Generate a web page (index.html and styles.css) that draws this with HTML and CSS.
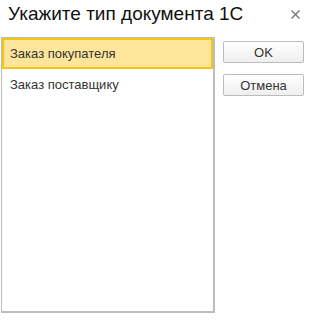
FILE: index.html
```html
<!DOCTYPE html>
<html lang="ru">
<head>
  <meta charset="UTF-8">
  <title>Укажите тип документа 1С</title>
  <link rel="stylesheet" href="styles.css">
</head>
<body>
  <div class="dialog">
    <div class="header">
      <h1 class="title">Укажите тип документа 1С</h1>
      <svg class="close-btn" width="9" height="9" viewBox="0 0 9 9">
        <path d="M0.5 0.5 L8.5 8.5 M8.5 0.5 L0.5 8.5" stroke="#6f6f6f" stroke-width="1.2" fill="none"/>
      </svg>
    </div>
    <div class="body">
      <div class="doc-list">
        <div class="doc-item selected">Заказ покупателя</div>
        <div class="doc-item">Заказ поставщику</div>
      </div>
      <div class="actions">
        <button class="btn">OK</button>
        <button class="btn">Отмена</button>
      </div>
    </div>
  </div>
</body>
</html>
```

FILE: styles.css
```css
body {
  margin: 0;
  padding: 0;
  background: #fff;
  font-family: 'Liberation Sans', Arial, sans-serif;
  color: #333;
}
.dialog {
  width: 310px;
  height: 320px;
  background: #fff;
}
.header {
  display: flex;
  align-items: center;
  justify-content: space-between;
  height: 28px;
  padding: 0 10px 0 8px;
}
.title {
  margin: 0;
  font-size: 19px;
  font-weight: normal;
  color: #111;
}
.close-btn {
  margin-top: 1px;
}
.body {
  display: flex;
  align-items: flex-start;
  gap: 8px;
  padding: 9px 0 0 1px;
}
.doc-list {
  box-sizing: border-box;
  width: 214px;
  height: 276px;
  border: 1px solid #bdbdbd;
  border-right-width: 2px;
  border-bottom-width: 2px;
}
.doc-item {
  box-sizing: border-box;
  height: 31px;
  line-height: 27px;
  padding-left: 6px;
  font-size: 13px;
  color: #333;
  border: 2px solid transparent;
}
.doc-item.selected {
  background: #fde69a;
  border-color: #f3c614;
}
.actions {
  display: flex;
  flex-direction: column;
  gap: 11px;
  padding-top: 4px;
}
.btn {
  width: 81px;
  height: 22px;
  font-family: 'Liberation Sans', Arial, sans-serif;
  font-size: 13px;
  color: #333;
  background: linear-gradient(#fff, #efefef);
  border: 1px solid #bcbcbc;
  border-radius: 2px;
  padding: 0;
}
```
